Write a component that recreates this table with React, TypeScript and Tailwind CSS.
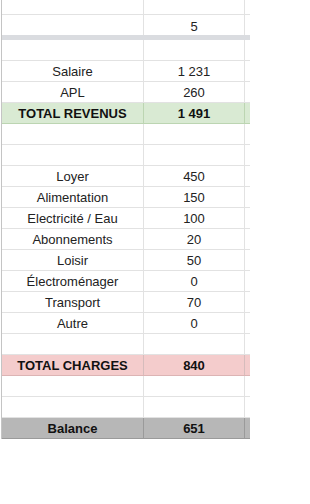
import React from "react";

type Tone = "plain" | "green" | "pink" | "gray";

interface Row {
  label?: string;
  value?: string;
  tone?: Tone;
  bold?: boolean;
}

const rows: Row[] = [
  { label: "Salaire", value: "1 231" },
  { label: "APL", value: "260" },
  { label: "TOTAL REVENUS", value: "1 491", tone: "green", bold: true },
  {},
  {},
  { label: "Loyer", value: "450" },
  { label: "Alimentation", value: "150" },
  { label: "Electricité / Eau", value: "100" },
  { label: "Abonnements", value: "20" },
  { label: "Loisir", value: "50" },
  { label: "Électroménager", value: "0" },
  { label: "Transport", value: "70" },
  { label: "Autre", value: "0" },
  {},
  { label: "TOTAL CHARGES", value: "840", tone: "pink", bold: true },
  {},
  {},
  { label: "Balance", value: "651", tone: "gray", bold: true },
];

const toneClass: Record<Tone, { row: string; line: string }> = {
  plain: { row: "bg-white border-[#e2e2e2]", line: "border-[#e2e2e2]" },
  green: { row: "bg-[#d9ead3] border-[#bcd5b2]", line: "border-[#bcd5b2]" },
  pink: { row: "bg-[#f4cccc] border-[#dcb4b4]", line: "border-[#d6bcbc]" },
  gray: { row: "bg-[#b7b7b7] border-[#9a9a9a]", line: "border-[#9a9a9a]" },
};

function SheetRow({ label, value, tone = "plain", bold }: Row) {
  const t = toneClass[tone];
  const text = bold ? "font-bold text-[#111]" : "text-[#222]";
  return (
    <div className={`flex h-[21px] border-b ${t.row}`}>
      <div className={`flex w-[142px] items-center justify-center border-r ${t.line} ${text}`}>
        {label}
      </div>
      <div className={`flex w-[101px] items-center justify-center border-r ${t.line} ${text}`}>
        {value}
      </div>
      <div className="w-[5px]" />
    </div>
  );
}

export default function App() {
  return (
    <div
      className="h-[504px] w-[310px] bg-white text-[13px] leading-none"
      style={{ fontFamily: '"Liberation Sans", Arial, sans-serif' }}
    >
      <div className="ml-px w-[249px] border-l border-[#c4c4c4]">
        {/* lignes figées */}
        <div className="flex h-[15px] border-b border-[#e2e2e2]">
          <div className="w-[142px] border-r border-[#e2e2e2]" />
          <div className="w-[101px] border-r border-[#e2e2e2]" />
        </div>
        <div className="flex h-[20px]">
          <div className="w-[142px] border-r border-[#e2e2e2]" />
          <div className="flex w-[101px] items-center justify-center border-r border-[#e2e2e2] pt-[2px] text-[#222]">
            5
          </div>
        </div>
        <div className="h-[5px] bg-[#dadce0]" />
        <div className="flex h-[21px] border-b border-[#e2e2e2]">
          <div className="w-[142px] border-r border-[#e2e2e2]" />
          <div className="w-[101px] border-r border-[#e2e2e2]" />
        </div>

        {rows.map((r, i) => (
          <SheetRow key={i} {...r} />
        ))}
      </div>
    </div>
  );
}
